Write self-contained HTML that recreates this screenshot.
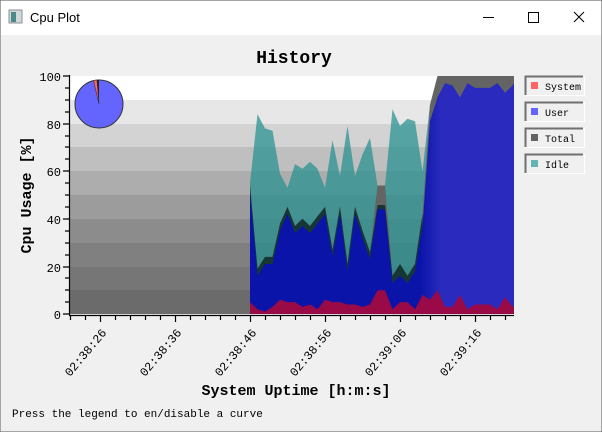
<!DOCTYPE html>
<html><head><meta charset="utf-8"><style>
html,body{margin:0;padding:0;width:602px;height:432px;overflow:hidden;background:#f0f0f0;}
svg{display:block}
text{font-family:"Liberation Mono","Noto Sans CJK SC",monospace;}
</style></head><body>
<svg width="602" height="432" viewBox="0 0 602 432" xmlns="http://www.w3.org/2000/svg">
<defs>
<linearGradient id="bg" gradientUnits="userSpaceOnUse" x1="0" y1="0" x2="600" y2="0">
<stop offset="0.70" stop-color="#0a14a8"/><stop offset="0.735" stop-color="#2a2abf"/>
</linearGradient>
</defs>
<rect x="0" y="0" width="602" height="432" fill="#f0f0f0" stroke="#5a5a5a" stroke-width="1"/>
<rect x="1" y="1" width="600" height="34" fill="#fff"/>
<rect x="9" y="10" width="13" height="13" fill="#cfd8dc" stroke="#777" stroke-width="0.8"/>
<rect x="11" y="12" width="5" height="10" fill="#4a8a8a"/>
<text x="30" y="22" font-size="13" style="font-family:'Liberation Sans',sans-serif" fill="#000">Cpu Plot</text>
<line x1="483" y1="17.5" x2="494" y2="17.5" stroke="#000"/>
<rect x="528.5" y="12.5" width="10" height="10" fill="none" stroke="#000"/>
<path d="M574 12 L584 22 M584 12 L574 22" stroke="#000"/>
<text x="294" y="63" font-size="18" font-weight="bold" text-anchor="middle" style="font-family:'Liberation Mono',serif">History</text>
<!-- bands -->
<rect x="70" y="76" width="444" height="24" fill="#ffffff"/>
<rect x="70" y="100" width="444" height="24" fill="#e7e7e7"/>
<rect x="70" y="124" width="444" height="23" fill="#d3d3d3"/>
<rect x="70" y="147" width="444" height="24" fill="#bfbfbf"/>
<rect x="70" y="171" width="444" height="24" fill="#adadad"/>
<rect x="70" y="195" width="444" height="24" fill="#9c9c9c"/>
<rect x="70" y="219" width="444" height="24" fill="#8c8c8c"/>
<rect x="70" y="243" width="444" height="24" fill="#808080"/>
<rect x="70" y="267" width="444" height="23" fill="#767676"/>
<rect x="70" y="290" width="444" height="24" fill="#6b6b6b"/>
<!-- teal idle -->
<polygon fill="rgb(32,142,142)" fill-opacity="0.7" points="250,314 250,183.1 257.5,114.1 265,128.4 272.5,130.7 280,173.6 287.5,187.9 295,164.1 302.5,168.8 310,161.7 317.5,168.8 325,187.9 332.5,140.3 340,176 347.5,126 355,176 362.5,154.5 370,137.9 377.5,185.5 385,185.5 392.5,109.3 400,126 407.5,118.8 415,121.2 422.5,171.2 430,104.6 430,314"/>
<!-- total -->
<polygon fill="#646464" points="250,314 250,185.5 257.5,268.8 265,256.9 272.5,256.9 280,223.6 287.5,206.9 295,226 302.5,218.8 310,226 317.5,216.4 325,206.9 332.5,249.7 340,206.9 347.5,264 355,206.9 362.5,230.7 370,252.1 377.5,185.5 385,185.5 392.5,275.9 400,264 407.5,275.9 415,264 422.5,214 430,104.6 437.5,76 514,76 514,314"/>
<polygon fill="#163636" points="250,314 250,185.5 257.5,268.8 265,256.9 272.5,256.9 280,223.6 287.5,206.9 295,226 302.5,218.8 310,226 317.5,216.4 325,206.9 332.5,249.7 340,206.9 347.5,264 355,206.9 362.5,230.7 370,252.1 377.5,205 385,205 392.5,275.9 400,264 407.5,275.9 415,264 422.5,214 424,314"/>
<!-- user -->
<polygon fill="url(#bg)" points="250,314 250,192.6 257.5,275.9 265,264 272.5,264 280,230.7 287.5,214 295,233 302.5,226 310,233 317.5,223.6 325,214 332.5,256.9 340,214 347.5,271.2 355,214 362.5,237.8 370,259.3 377.5,209.3 385,209.3 392.5,283 400,275.9 407.5,283 415,271.2 422.5,226 430,121.2 437.5,97.4 445,83.1 452.5,85.5 460,97.4 467.5,83.1 475,87.9 482.5,87.9 490,87.9 497.5,83.1 505,92.7 512.5,85.5 514,83 514,314"/>
<!-- system -->
<polygon fill="#990a46" points="250,314 250,302.1 257.5,309.2 265,311.6 272.5,306.9 280,299.7 287.5,302.1 295,302.1 302.5,306.9 310,304.5 317.5,309.2 325,299.7 332.5,302.1 340,302.1 347.5,304.5 355,304.5 362.5,306.9 370,304.5 377.5,290.2 385,290.2 392.5,309.2 400,302.1 407.5,302.1 415,309.2 422.5,295 430,299.7 437.5,290.2 445,306.9 452.5,306.9 460,295 467.5,309.2 475,304.5 482.5,304.5 490,304.5 497.5,309.2 505,297.3 512.5,306.9 514,306 514,314"/>
<!-- pie -->
<circle cx="99" cy="104" r="24" fill="#6464ff" stroke="#333" stroke-width="1"/>
<path d="M99,104 L93.5,80.6 A24,24 0 0 1 97,80.1 Z" fill="#ff6464" stroke="#333" stroke-width="0.6"/>
<path d="M99,104 L97,80.1 A24,24 0 0 1 99,80 Z" fill="#222"/>
<!-- axes -->
<g stroke="#000" stroke-width="1.2">
<line x1="69.5" y1="75" x2="69.5" y2="315"/>
<line x1="69" y1="315.5" x2="514" y2="315.5"/>
<path d="M63 76H69 M65 88H69 M65 100H69 M65 112H69 M63 124H69 M65 136H69 M65 147H69 M65 159H69 M63 171H69 M65 183H69 M65 195H69 M65 207H69 M63 219H69 M65 231H69 M65 243H69 M65 255H69 M63 267H69 M65 278H69 M65 290H69 M65 302H69 M63 314H69"/>
<path d="M70.5 316V320 M85.5 316V320 M100.5 316V322 M115.5 316V320 M130.5 316V320 M145.5 316V320 M160.5 316V320 M175.5 316V322 M190.5 316V320 M205.5 316V320 M220.5 316V320 M235.5 316V320 M250.5 316V322 M265.5 316V320 M280.5 316V320 M295.5 316V320 M310.5 316V320 M325.5 316V322 M340.5 316V320 M355.5 316V320 M370.5 316V320 M385.5 316V320 M400.5 316V322 M415.5 316V320 M430.5 316V320 M445.5 316V320 M460.5 316V320 M475.5 316V322 M490.5 316V320 M505.5 316V320"/>
</g>
<g font-size="12" text-anchor="end" fill="#000">
<text x="61" y="81">100</text><text x="61" y="129">80</text><text x="61" y="176">60</text><text x="61" y="224">40</text><text x="61" y="272">20</text><text x="61" y="319">0</text>
</g>
<g font-size="12" text-anchor="end" fill="#000">
<text transform="translate(107,333) rotate(-50)">02:38:26</text>
<text transform="translate(182,333) rotate(-50)">02:38:36</text>
<text transform="translate(257,333) rotate(-50)">02:38:46</text>
<text transform="translate(332,333) rotate(-50)">02:38:56</text>
<text transform="translate(407,333) rotate(-50)">02:39:06</text>
<text transform="translate(482,333) rotate(-50)">02:39:16</text>
</g>
<text transform="translate(31,195) rotate(-90)" font-size="15" font-weight="bold" text-anchor="middle">Cpu Usage [%]</text>
<text x="296" y="395" font-size="15" font-weight="bold" text-anchor="middle">System Uptime [h:m:s]</text>
<text x="12" y="417" font-size="11">Press the legend to en/disable a curve</text>
<!-- legend -->
<g font-size="10" fill="#000">
<g><rect x="525.5" y="76.5" width="59" height="19" fill="#f0f0f0" stroke="#fff"/><path d="M525.5 95V76.5H583" stroke="#707070" stroke-width="2" fill="none"/><rect x="531" y="82" width="7" height="7" fill="#ff6464"/><text x="545" y="90">System</text></g>
<g><rect x="525.5" y="102.5" width="59" height="19" fill="#f0f0f0" stroke="#fff"/><path d="M525.5 121V102.5H583" stroke="#707070" stroke-width="2" fill="none"/><rect x="531" y="108" width="7" height="7" fill="#6464ff"/><text x="545" y="116">User</text></g>
<g><rect x="525.5" y="128.5" width="59" height="19" fill="#f0f0f0" stroke="#fff"/><path d="M525.5 147V128.5H583" stroke="#707070" stroke-width="2" fill="none"/><rect x="531" y="134" width="7" height="7" fill="#646464"/><text x="545" y="142">Total</text></g>
<g><rect x="525.5" y="154.5" width="59" height="19" fill="#f0f0f0" stroke="#fff"/><path d="M525.5 173V154.5H583" stroke="#707070" stroke-width="2" fill="none"/><rect x="531" y="160" width="7" height="7" fill="#64b4b4"/><text x="545" y="168">Idle</text></g>
</g>
</svg>
</body></html>
